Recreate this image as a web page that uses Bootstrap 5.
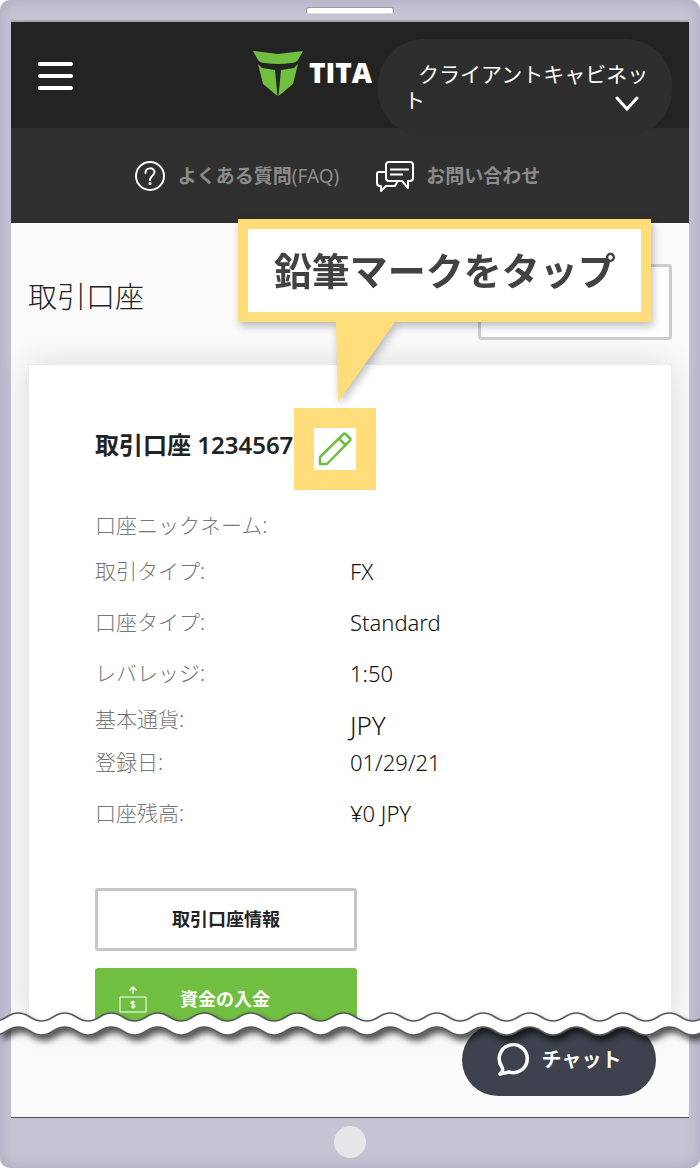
<!DOCTYPE html>
<html lang="ja">
<head>
<meta charset="utf-8">
<meta name="viewport" content="width=device-width, initial-scale=1">
<title>取引口座</title>
<link href="https://cdn.jsdelivr.net/npm/bootstrap@5.3.0/dist/css/bootstrap.min.css" rel="stylesheet">
<style>
  body { font-family: "Noto Sans", "Noto Sans CJK JP", sans-serif; color: #222; background: #fff; }
  .phone { background: #c6c4d3; border-radius: 10px; padding: 0 11px; box-shadow: inset 0 0 14px 3px #b0aec4; min-height: 100vh; }
  .speaker { height: 20px; }
  .speaker span { width: 88px; height: 7px; background: #fff; border: 1px solid #999; border-bottom-color: #ddd; border-radius: 3px; }
  .screen { background: #fafafa; border-top: 2px solid #aaa; border-bottom: 1px solid #555; }
  .topbar { background: #232323; height: 106px; padding-left: 27px; padding-right: 17px; z-index: 2; }
  .burger { width: 35px; height: 28px; margin-top: 40px; }
  .burger span { height: 4px; border-radius: 2px; background: #fff; }
  .brand { margin-left: 180px; margin-top: 29px; gap: 6px; font: 800 28px/42px "Open Sans", sans-serif; min-width: 0; color: #fff; }
  .cabinet { flex: 0 0 294px; height: 97px; margin-top: 17px; border-radius: 46px; background: #2e2e2e; color: #fff; font-size: 21px; line-height: 26px; text-indent: 14px; padding: 0 12px 2px 26px; }
  .cabinet svg { right: 33px; bottom: 25px; }
  .helpbar { background: #303030; height: 95px; gap: 37px; padding-right: 26px; }
  .helpbar a { color: #8c8c8c; font-size: 19px; line-height: 28px; font-weight: 700; gap: 12px; }
  .title-row { padding: 41px 17px 24px; }
  .title-row h1 { font-size: 29px; line-height: 66px; font-weight: 300; }
  .new-account { width: 194px; height: 76px; border: 3px solid #cdcdcd; border-radius: 4px; background: #fff; }
  .account { margin: 0 17px; padding: 43px 66px 0; background: #fff; border: 1px solid #ebebeb; border-bottom: 0; border-radius: 3px 3px 0 0; box-shadow: 0 0 30px #0002; }
  .account h2 { font-size: 24px; line-height: 74px; font-weight: 600; height: 82px; padding-right: 1px; }
  .edit { width: 82px; height: 82px; border: 20px solid #ffdd7b; background: #fff; }
  .callout { left: -56px; top: -189px; width: 413px; z-index: 3; filter: drop-shadow(2px 4px 4px #0004); }
  .callout p { height: 103px; border: 10px solid #ffdd7b; background: #fff; color: #424242; font-size: 38px; line-height: 82px; font-weight: 700; }
  .callout svg { margin-left: 98px; }
  .facts { font-size: 22px; line-height: 28px; margin-top: 12px; grid-template-columns: 1fr 1fr; grid-template-rows: 46px 46px 56px 46px 46px 40px 62px; }
  .facts dt { font-size: 21px; font-weight: 300; color: #777; }
  .facts dd { font-weight: 300; color: #111; }
  .facts .currency { font-size: 26px; padding-top: 12px; }
  .actions { width: 262px; gap: 17px; margin-top: 44px; font-size: 18px; }
  .actions button { font-weight: 700; border-radius: 3px; }
  .info { height: 63px; border: 3px solid #c6c6c6; background: #fff; color: #222; }
  .deposit { height: 56px; border: 0; background: #70bf41; color: #fff; padding: 7px 24px 0; gap: 33px; }
  .tear { height: 44px; margin: -15px -11px -29px; z-index: 2; }
  .dock { height: 93px; padding-right: 33px; }
  .chat { width: 194px; height: 72px; border: 0; border-radius: 36px; background: #3d424e; color: #fff; font-size: 20px; font-weight: 700; gap: 13px; }
  .home { height: 48px; }
  .home button { width: 32px; height: 32px; background: #e4e6e8; border: 0; }
</style>
</head>
<body>
<div class="phone">
  <div class="speaker d-flex justify-content-center align-items-center"><span></span></div>
  <div class="screen">
    <header class="topbar d-flex align-items-start position-relative">
      <button class="burger btn p-0 border-0 rounded-0 d-flex flex-column justify-content-between flex-shrink-0" aria-label="メニュー"><span class="w-100"></span><span class="w-100"></span><span class="w-100"></span></button>
      <a class="brand d-flex text-decoration-none flex-grow-1" href="#">
        <svg class="flex-shrink-0" width="50" height="46" viewBox="0 0 50 46" fill="#70bf41"><path d="M0 0 25 3 50 0 45 9Q43 12 38 12Q25 14 12 12Q7 12 5 9zM5 13 9 17 22 19 24.500 45 10 33zM45 13 41 17 28 19 25.500 45 40 33z"/></svg>
        <span>TITA</span>
      </a>
      <button class="cabinet btn border-0 position-relative text-start">クライアントキャビネット
        <svg class="position-absolute" width="24" height="15" viewBox="0 0 24 15" fill="none" stroke="#fff" stroke-width="3" stroke-linecap="round"><path d="m2 2 10 11L22 2"/></svg>
      </button>
    </header>
    <nav class="helpbar d-flex justify-content-center align-items-center">
      <a class="d-flex align-items-center text-decoration-none" href="#"><svg width="32" height="32" viewBox="0 0 32 32" fill="none" stroke="#fff" stroke-width="2"><circle cx="16" cy="16" r="14"/><path d="M11.500 13c0-6 9-6 9-1 0 4-4.500 4-4.500 8" stroke-linecap="round"/><circle cx="16" cy="23.500" r=".6"/></svg><span>よくある質問<span class="fw-normal">(FAQ)</span></span></a>
      <a class="d-flex align-items-center text-decoration-none" href="#"><svg width="38" height="32" viewBox="0 0 38 32" fill="none" stroke="#fff" stroke-width="2" stroke-linejoin="round"><path d="M13 2h21q3 0 3 3v13q0 3-3 3h-2v7l-6-7H13q-3 0-3-3V5q0-3 3-3zM10 12H3q-2 0-2 2v9q0 3 3 3h1v5l5-5h8q2 0 3-4"/><path d="M14 9.500h19M14 14.500h13" stroke-width="1.800"/></svg>お問い合わせ</a>
    </nav>
    <main>
      <div class="title-row d-flex justify-content-between">
        <h1 class="m-0">取引口座</h1>
        <button class="new-account" aria-label="口座開設"></button>
      </div>
      <section class="account">
        <div class="d-flex">
          <h2 class="m-0">取引口座 1234567</h2>
          <div class="position-relative">
            <button class="edit d-flex align-items-center justify-content-center p-0" aria-label="編集"><svg width="36" height="36" viewBox="0 0 36 36" fill="none" stroke="#70bf41" stroke-width="2.500" stroke-linejoin="round"><path d="M3 26 26.500 3q1-1 2 0l4.500 4.500q1 1 0 2L10 33H3zM22 7.500l6.500 6.500"/></svg></button>
            <div class="callout position-absolute">
              <p class="m-0 text-center">鉛筆マークをタップ</p>
              <svg class="d-block" width="60" height="80" viewBox="0 0 60 80"><path d="M0 0h59L2 80z" fill="#ffdd7b"/></svg>
            </div>
          </div>
        </div>
        <dl class="facts d-grid mb-0 align-items-center">
          <dt>口座ニックネーム:</dt><dd class="m-0"></dd>
          <dt>取引タイプ:</dt><dd class="m-0">FX</dd>
          <dt>口座タイプ:</dt><dd class="m-0">Standard</dd>
          <dt>レバレッジ:</dt><dd class="m-0">1:50</dd>
          <dt>基本通貨:</dt><dd class="currency m-0">JPY</dd>
          <dt>登録日:</dt><dd class="m-0">01/29/21</dd>
          <dt>口座残高:</dt><dd class="m-0">¥0 JPY</dd>
        </dl>
        <div class="actions d-flex flex-column">
          <button class="info">取引口座情報</button>
          <button class="deposit d-flex align-items-center"><svg width="28" height="28" viewBox="0 0 28 28" fill="none" stroke="#fff"><path d="M1 11h26v15H1z"/><path d="M14 8V1m-3.500 3.500L14 1l3.500 3.500" stroke-width="1.300"/><path d="M16 16.500q-4-1.500-4 .5 0 1 2 1.500t2 1.500q0 2-4 .5M14 14.500v8" stroke-width="1.200"/></svg>資金の入金</button>
        </div>
      </section>
      <svg class="tear d-block position-relative" style="width:calc(100% + 22px)" aria-hidden="true">
        <defs>
          <filter id="shade" x="-5%" y="-20%" width="110%" height="160%"><feDropShadow dx="3" dy="5" stdDeviation="3" flood-color="#000" flood-opacity=".65"/></filter>
          <pattern id="wave" x="-5" width="46.500" height="44" patternUnits="userSpaceOnUse">
            <path d="M-23.250 4C-12 4-11.250 12 0 12S12 4 23.250 4 35.250 12 46.500 12 58.500 4 69.750 4V18C58.500 18 57.750 26 46.500 26S34.500 18 23.250 18 11.250 26 0 26-12 18-23.250 18z" fill="#fff" stroke="#555" stroke-width="1.600"/>
          </pattern>
        </defs>
        <rect width="100%" height="44" fill="url(#wave)" filter="url(#shade)"/>
      </svg>
      <div class="dock d-flex justify-content-end align-items-start">
        <button class="chat d-flex align-items-center justify-content-center"><svg width="32" height="34" viewBox="0 0 32 34" fill="none" stroke="#fff" stroke-width="3.500" stroke-linecap="round" stroke-linejoin="round"><path d="M5 24A14 14 0 1 1 12 29L3 31Q7 28 5 24z"/></svg>チャット</button>
      </div>
    </main>
  </div>
  <div class="home d-flex justify-content-center align-items-center"><button class="rounded-circle" aria-label="ホーム"></button></div>
</div>
<script src="https://cdn.jsdelivr.net/npm/bootstrap@5.3.0/dist/js/bootstrap.bundle.min.js"></script>
</body>
</html>
